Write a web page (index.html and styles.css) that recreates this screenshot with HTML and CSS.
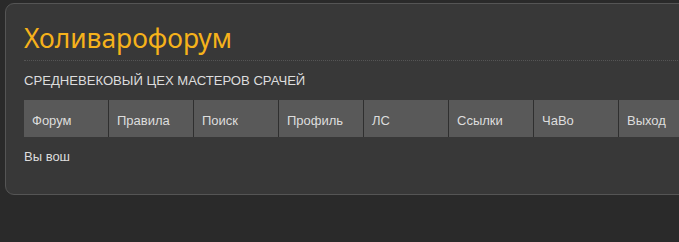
FILE: index.html
```html
<!DOCTYPE html>
<html lang="ru">
<head>
    <meta charset="UTF-8">
    <title>Холиварофорум</title>
    <link rel="stylesheet" href="styles.css">
</head>
<body>
    <div class="wrap">
        <div class="header">
            <h1 class="logo">Холиварофорум</h1>
            <p class="slogan">СРЕДНЕВЕКОВЫЙ ЦЕХ МАСТЕРОВ СРАЧЕЙ</p>
        </div>
        <ul class="menu">
            <li><a href="#">Форум</a></li>
            <li><a href="#">Правила</a></li>
            <li><a href="#">Поиск</a></li>
            <li><a href="#">Профиль</a></li>
            <li><a href="#">ЛС</a></li>
            <li><a href="#">Ссылки</a></li>
            <li><a href="#">ЧаВо</a></li>
            <li><a href="#">Выход</a></li>
        </ul>
        <div class="welcome">Вы вош</div>
    </div>
</body>
</html>
```

FILE: styles.css
```css
html { overflow: hidden; }
body { margin: 0; background: #2a2a2a; font-family: "Liberation Sans", Arial, sans-serif; font-size: 13px; color: #ddd; height: 242px; }
.wrap { margin: 3px 0 0 5px; width: 720px; height: 192px; box-sizing: border-box; background: #383838; border: 1px solid #555; border-radius: 9px; padding: 0 0 0 18px; }
.header { padding-top: 16px; }
.logo { margin: 0; font-family: "Noto Sans", "DejaVu Sans", sans-serif; font-weight: normal; font-size: 26.4px; line-height: 36px; color: #f6b21b; padding-bottom: 4px; border-bottom: 1px dotted #555; }
.slogan { margin: 0; padding: 12px 0 0; line-height: 16px; height: 27px; font-size: 13.1px; }
.menu { list-style: none; margin: 0; padding: 0; display: flex; }
.menu li { width: 84px; height: 37px; background: #595959; border-right: 1px solid #2f2f2f; }
.menu a { display: block; padding: 0 8px; line-height: 42px; color: #ddd; text-decoration: none; }
.welcome { padding-top: 12px; line-height: 16px; }
```
